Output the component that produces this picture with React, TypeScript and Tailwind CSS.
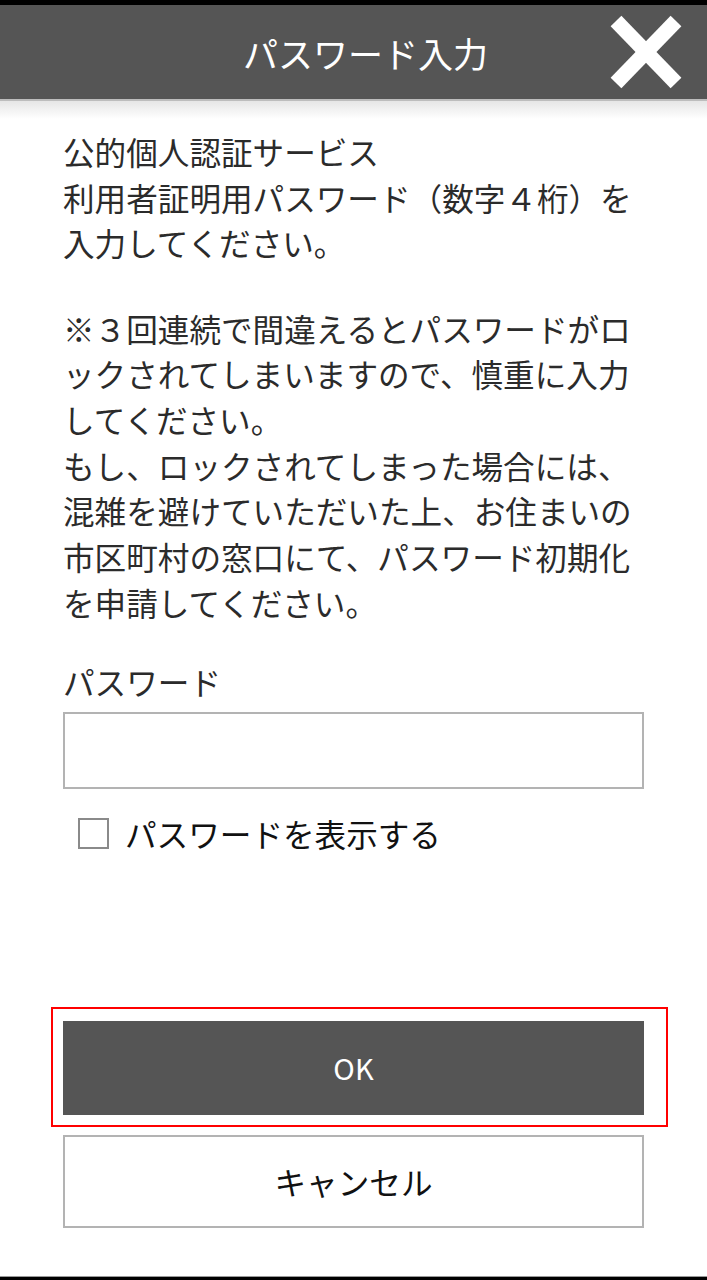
import { useState } from 'react'

const font = { fontFamily: '"Noto Sans CJK JP", "Noto Sans", sans-serif' }

export default function App() {
  const [show, setShow] = useState(false)

  return (
    <div
      className="flex h-[1280px] w-full flex-col bg-white text-[#2b2b2b]"
      style={font}
    >
      <div className="h-[5px] bg-black" />

      {/* header */}
      <header className="relative flex h-[94px] items-center justify-center bg-[#555] pl-[24px]">
        <h1 className="text-[35px] leading-none font-normal text-white">パスワード入力</h1>
        <button className="absolute top-[10px] right-[25px] h-[74px] w-[72px]" aria-label="閉じる">
          <svg viewBox="0 0 72 74" className="h-full w-full">
            <line x1="6" y1="6" x2="66" y2="68" stroke="#fff" strokeWidth="15" />
            <line x1="66" y1="6" x2="6" y2="68" stroke="#fff" strokeWidth="15" />
          </svg>
        </button>
      </header>
      <div className="h-[2px] bg-[#bdbdbd]" />
      <div className="h-[18px] bg-gradient-to-b from-[#e6e6e6] to-white" />

      <main className="flex flex-1 flex-col px-[63px] pt-[10px]">
        <p className="text-[31.6px] leading-[45.5px]">
          公的個人認証サービス
          <br />
          利用者証明用パスワード（数字４桁）を入力してください。
        </p>
        <p className="mt-[40px] text-[31.6px] leading-[45.7px]">
          ※３回連続で間違えるとパスワードがロックされてしまいますので、慎重に入力してください。
          <br />
          もし、ロックされてしまった場合には、混雑を避けていただいた上、お住まいの市区町村の窓口にて、パスワード初期化を申請してください。
        </p>

        <label className="mt-[34px] block text-[31.6px] leading-[45.5px]">パスワード</label>
        <input
          type={show ? 'text' : 'password'}
          className="mt-[7px] h-[77px] w-full border-2 border-[#b3b3b3] px-3 text-[28px] outline-none"
        />

        <label className="mt-[29px] flex items-center gap-[16px] pl-[15px] text-[31.6px] leading-none text-[#111]">
          <span
            onClick={() => setShow(!show)}
            className="flex h-[31px] w-[31px] items-center justify-center border-2 border-[#8a8a8a] bg-white text-[22px] leading-none"
          >
            {show ? '✓' : ''}
          </span>
          パスワードを表示する
        </label>

        <div className="flex-1" />

        <div className="relative">
          <button className="flex h-[94px] w-full items-center justify-center bg-[#555] text-[29px] text-white">
            OK
          </button>
          <div className="pointer-events-none absolute -top-[14px] -right-[24px] -bottom-[12px] -left-[12px] border-2 border-[#f00]" />
        </div>
        <button className="mt-[20px] mb-[48px] flex h-[93px] w-full items-center justify-center border-2 border-[#b3b3b3] bg-white text-[31.6px] text-[#111]">
          キャンセル
        </button>
      </main>

      <div className="h-[1px] bg-[#999]" />
      <div className="h-[3px] bg-black" />
    </div>
  )
}
